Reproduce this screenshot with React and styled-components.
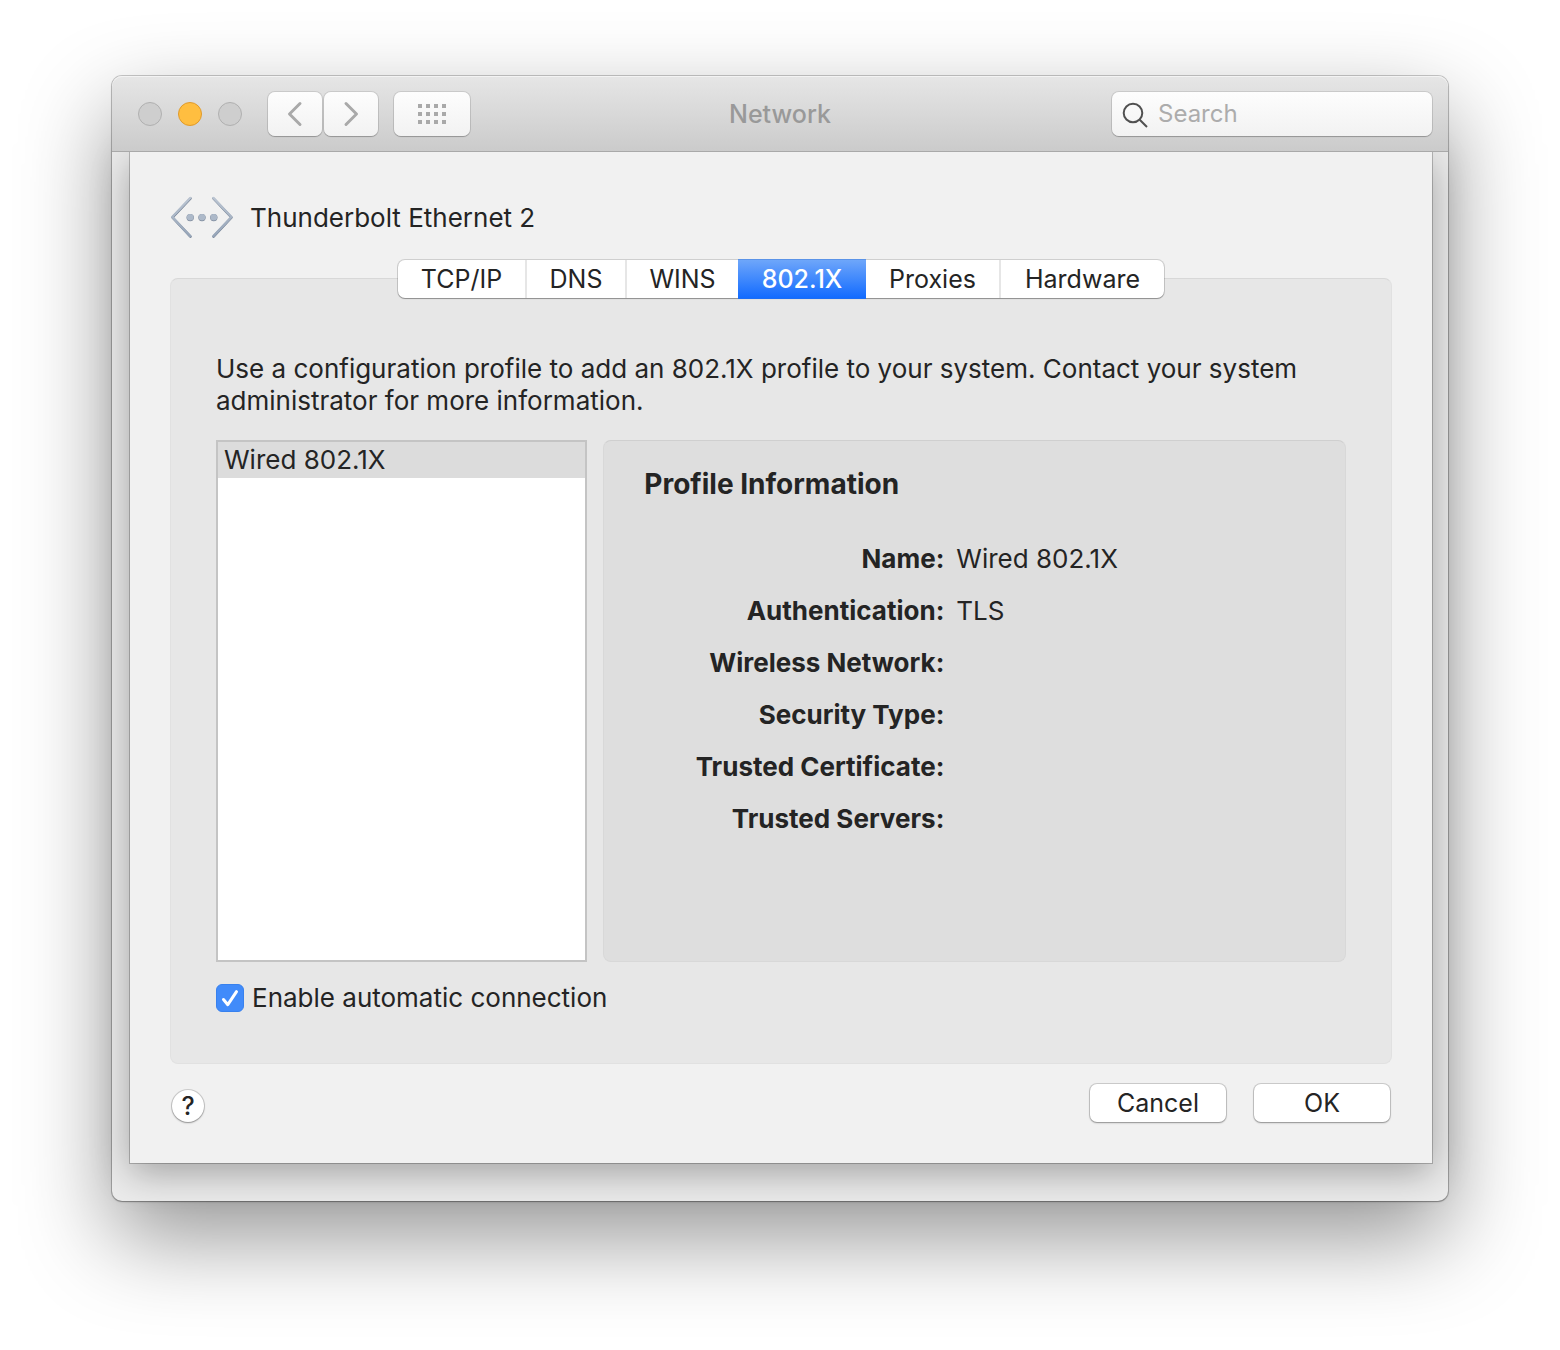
import React, { useState } from 'react';
import styled, { createGlobalStyle } from 'styled-components';

function App() {
  const [activeTab, setActiveTab] = useState('802.1X');
  const [autoConnect, setAutoConnect] = useState(true);

  return (
    <Page>
      <GlobalStyle />
      <Window>
        <TitleBar>
          <TitleLeft>
            <Lights>
              <Light type="button" aria-label="Close" />
              <Light type="button" aria-label="Minimize" $active />
              <Light type="button" aria-label="Zoom" />
            </Lights>
            <NavGroup>
              <ToolButton type="button" aria-label="Back">
                <svg width="16" height="26" viewBox="0 0 16 26">
                  <path d="M13 2.5 2.5 13 13 23.5" />
                </svg>
              </ToolButton>
              <ToolButton type="button" aria-label="Forward">
                <svg width="16" height="26" viewBox="0 0 16 26">
                  <path d="M3 2.5 13.5 13 3 23.5" />
                </svg>
              </ToolButton>
            </NavGroup>
            <ToolButton type="button" aria-label="Show All" $wide>
              <svg width="28" height="20" viewBox="0 0 28 20">
                {GRID_ROWS.map(y =>
                  GRID_COLS.map(x => (
                    <rect key={`${x}-${y}`} x={x} y={y} width="4" height="4" />
                  ))
                )}
              </svg>
            </ToolButton>
          </TitleLeft>
          <WindowTitle>Network</WindowTitle>
          <SearchBox>
            <svg width="28" height="28" viewBox="0 0 28 28" aria-hidden="true">
              <circle cx="11" cy="13" r="9.3" />
              <path d="m17.7 19.700 7.300 7.300" />
            </svg>
            <input type="search" placeholder="Search" aria-label="Search" />
          </SearchBox>
        </TitleBar>

        <Sheet>
          <ServiceHeader>
            <EthernetIcon />
            <h2>Thunderbolt Ethernet 2</h2>
          </ServiceHeader>

          <TabBar role="tablist">
            {TABS.map(({ name, width }) => (
              <Tab
                key={name}
                type="button"
                role="tab"
                aria-selected={name === activeTab}
                $width={width}
                $active={name === activeTab}
                onClick={() => setActiveTab(name)}
              >
                {name}
              </Tab>
            ))}
          </TabBar>

          <Panel>
            <Hint>
              Use a configuration profile to add an 802.1X profile to your
              system. Contact your system administrator for more information.
            </Hint>
            <Columns>
              <ProfileList>
                <ProfileItem>Wired 802.1X</ProfileItem>
              </ProfileList>
              <ProfileInfo>
                <h3>Profile Information</h3>
                <InfoList>
                  {INFO.map(({ label, value }) => (
                    <React.Fragment key={label}>
                      <dt>{label}:</dt>
                      <dd>{value}</dd>
                    </React.Fragment>
                  ))}
                </InfoList>
              </ProfileInfo>
            </Columns>
            <CheckLabel>
              <CheckBox>
                <input
                  type="checkbox"
                  checked={autoConnect}
                  onChange={e => setAutoConnect(e.target.checked)}
                />
                <svg width="28" height="28" viewBox="0 0 28 28">
                  <path d="m7.5 15.5 4.3 5.2 8.7-13" />
                </svg>
              </CheckBox>
              Enable automatic connection
            </CheckLabel>
          </Panel>

          <Footer>
            <HelpButton type="button" aria-label="Help">
              ?
            </HelpButton>
            <Actions>
              <PushButton type="button">Cancel</PushButton>
              <PushButton type="button">OK</PushButton>
            </Actions>
          </Footer>
        </Sheet>
      </Window>
    </Page>
  );
}

export default App;

function EthernetIcon() {
  return (
    <svg width="64" height="44" viewBox="0 0 64 44" aria-hidden="true">
      <defs>
        <linearGradient id="steel" x1="0" y1="0" x2="0" y2="44" gradientUnits="userSpaceOnUse">
          <stop offset="0" stopColor="#bcc6d3" />
          <stop offset="1" stopColor="#93a2b6" />
        </linearGradient>
      </defs>
      <g fill="none" strokeWidth="2.5" strokeLinecap="round" strokeLinejoin="round">
        <path d="M20.5 2.500 2.500 21.500 20.500 40.700M43.500 2.500l18 19-18 19.200" stroke="#69778b" />
        <path d="M20.2 2 2.300 21 20.200 40.200M43.500 2l17.900 19L43.500 40.200" stroke="url(#steel)" />
      </g>
      <g fill="#7c899b">
        <circle cx="20.2" cy="21.6" r="3.7" />
        <circle cx="32" cy="21.6" r="3.7" />
        <circle cx="43.8" cy="21.6" r="3.7" />
      </g>
      <g fill="#adb9c9">
        <circle cx="20.2" cy="21.2" r="3.3" />
        <circle cx="32" cy="21.2" r="3.3" />
        <circle cx="43.8" cy="21.2" r="3.3" />
      </g>
    </svg>
  );
}

const GRID_ROWS = [0, 8, 16];
const GRID_COLS = [0, 8, 16, 24];

const TABS = [
  { name: 'TCP/IP', width: 129 },
  { name: 'DNS', width: 100 },
  { name: 'WINS', width: 111 },
  { name: '802.1X', width: 128 },
  { name: 'Proxies', width: 135 },
  { name: 'Hardware', width: 163 },
];

const INFO = [
  { label: 'Name', value: 'Wired 802.1X' },
  { label: 'Authentication', value: 'TLS' },
  { label: 'Wireless Network', value: '' },
  { label: 'Security Type', value: '' },
  { label: 'Trusted Certificate', value: '' },
  { label: 'Trusted Servers', value: '' },
];

const GlobalStyle = createGlobalStyle`
  * {
    box-sizing: border-box;
  }

  body {
    margin: 0;
    background: #fff;
    color: #242424;
    font-family: Inter, 'Liberation Sans', sans-serif;
    font-size: 26px;
    line-height: 32px;
  }

  h1, h2, h3, p, ul, dl, dd {
    margin: 0;
    padding: 0;
  }

  button, input {
    font: inherit;
    font-size: 25px;
    color: inherit;
  }
`;

const Page = styled.div`
  min-height: 100vh;
  padding: 76px 112px 148px;
  overflow: hidden;
`;

const Window = styled.main`
  padding-bottom: 38px;
  border-radius: 10px;
  background: #ececec;
  box-shadow:
    0 0 0 1px rgba(0, 0, 0, 0.2),
    0 1px 2px rgba(0, 0, 0, 0.25),
    0 36px 90px rgba(0, 0, 0, 0.42);
`;

const TitleBar = styled.header`
  position: relative;
  z-index: 1;
  display: grid;
  grid-template-columns: 1fr auto 1fr;
  align-items: center;
  height: 76px;
  padding: 0 16px;
  border-bottom: 1px solid #a9a9a9;
  border-radius: 10px 10px 0 0;
  background: linear-gradient(#e6e6e6, #cbcbcb);
  box-shadow: inset 0 1px 0 #f3f3f3;
`;

const TitleLeft = styled.div`
  display: flex;
  align-items: center;
  gap: 16px;
`;

const Lights = styled.div`
  display: flex;
  gap: 16px;
  margin: 0 10px;
`;

const Light = styled.button`
  width: 24px;
  height: 24px;
  padding: 0;
  border: 1px solid ${({ $active }) => ($active ? '#e09a2b' : '#b0b0b0')};
  border-radius: 50%;
  background: ${({ $active }) => ($active ? '#ffbe40' : '#cecece')};
`;

const NavGroup = styled.div`
  display: flex;
  gap: 2px;
`;

const ToolButton = styled.button`
  display: flex;
  align-items: center;
  justify-content: center;
  width: ${({ $wide }) => ($wide ? '76px' : '54px')};
  height: 44px;
  padding: 0;
  border: 0;
  border-radius: 7px;
  background: linear-gradient(#fdfdfd, #f2f2f2);
  box-shadow:
    0 0 0 1px rgba(0, 0, 0, 0.1),
    0 1px 1px rgba(0, 0, 0, 0.2);

  path {
    fill: none;
    stroke: #a9a9a9;
    stroke-width: 3;
    stroke-linecap: round;
    stroke-linejoin: round;
  }

  rect {
    fill: #a9a9a9;
  }
`;

const WindowTitle = styled.h1`
  color: #999;
  font-size: 25px;
  font-weight: 500;
`;

const SearchBox = styled.label`
  display: flex;
  align-items: center;
  justify-self: end;
  gap: 8px;
  width: 320px;
  height: 44px;
  padding: 0 10px;
  border-radius: 7px;
  background: linear-gradient(#fdfdfd, #f2f2f2);
  box-shadow:
    0 0 0 1px rgba(0, 0, 0, 0.1),
    0 1px 1px rgba(0, 0, 0, 0.2);

  svg {
    flex: none;
    fill: none;
    stroke: #505050;
    stroke-width: 2;
  }

  input {
    flex: 1;
    min-width: 0;
    padding: 0;
    border: 0;
    outline: 0;
    background: none;
    font-size: 24px;
  }

  input::placeholder {
    color: #acacac;
  }
`;

const Sheet = styled.section`
  margin: 0 16px 0 18px;
  padding: 44px 40px 41px;
  background: #f1f1f1;
  box-shadow:
    0 0 0 1px rgba(0, 0, 0, 0.22),
    0 10px 36px rgba(0, 0, 0, 0.32);
`;

const ServiceHeader = styled.div`
  display: flex;
  align-items: center;
  gap: 16px;
  height: 44px;

  h2 {
    font-size: 26px;
    font-weight: 400;
  }
`;

const TabBar = styled.div`
  position: relative;
  z-index: 1;
  display: flex;
  width: fit-content;
  height: 38px;
  margin: 20px auto -20px;
  border-radius: 7px;
  background: #fff;
  box-shadow:
    0 0 0 1px rgba(0, 0, 0, 0.14),
    0 1px 1px rgba(0, 0, 0, 0.28);
`;

const Tab = styled.button`
  width: ${({ $width }) => $width}px;
  padding: 0;
  border: 0;
  border-right: 2px solid #e6e6e6;
  background: none;

  &:last-child {
    border-right: 0;
  }

  ${({ $active }) =>
    $active &&
    `
    border: 0;
    background: linear-gradient(#6ea6fa, #126bff);
    box-shadow: 0 -1px 0 #5a93e8, 0 1px 0 #1a6df5;
    color: #fff;
    font-weight: 500;
  `}

  &:has(+ [aria-selected='true']) {
    border-right: 0;
  }
`;

const Panel = styled.div`
  padding: 74px 45px 49px;
  border: 1px solid #e1e1e1;
  border-top-color: #d8d8d8;
  border-radius: 8px;
  background: #e7e7e7;
`;

const Hint = styled.p`
  margin-bottom: 23px;
`;

const Columns = styled.div`
  display: grid;
  grid-template-columns: 1fr 2fr;
  gap: 16px;
  min-height: 522px;
`;

const ProfileList = styled.ul`
  border: 2px solid #c4c4c4;
  background: #fff;
  list-style: none;
`;

const ProfileItem = styled.li`
  padding: 2px 6px;
  background: #dcdcdc;
`;

const ProfileInfo = styled.section`
  padding: 27px 40px;
  border: 1px solid #d8d8d8;
  border-top-color: #cfcfcf;
  border-radius: 8px;
  background: #dedede;

  h3 {
    font-size: 28px;
    font-weight: 700;
  }
`;

const InfoList = styled.dl`
  display: grid;
  grid-template-columns: 300px 1fr;
  grid-auto-rows: 32px;
  gap: 20px 12px;
  margin-top: 43px;

  dt {
    font-weight: 700;
    text-align: right;
  }
`;

const CheckLabel = styled.label`
  display: flex;
  align-items: center;
  gap: 8px;
  width: fit-content;
  margin-top: 20px;
`;

const CheckBox = styled.span`
  display: grid;

  > * {
    grid-area: 1 / 1;
  }

  input {
    appearance: none;
    width: 28px;
    height: 28px;
    margin: 0;
    border: 1px solid #b5b5b5;
    border-radius: 6px;
    background: #fff;
  }

  input:checked {
    border-color: #3881ee;
    background: #418bfa;
  }

  svg {
    display: none;
    fill: none;
    stroke: #fff;
    stroke-width: 3;
    stroke-linecap: round;
    stroke-linejoin: round;
    pointer-events: none;
  }

  input:checked + svg {
    display: block;
  }
`;

const Footer = styled.footer`
  display: flex;
  align-items: center;
  justify-content: space-between;
  margin-top: 20px;
`;

const HelpButton = styled.button`
  width: 32px;
  height: 32px;
  margin: 6px 0 0 2px;
  padding: 0;
  border: 0;
  border-radius: 50%;
  background: #fff;
  box-shadow:
    0 0 0 1px rgba(0, 0, 0, 0.15),
    0 1px 2px rgba(0, 0, 0, 0.3);
  font-weight: 500;
`;

const Actions = styled.div`
  display: flex;
  gap: 28px;
  padding-right: 2px;
`;

const PushButton = styled.button`
  width: 136px;
  height: 38px;
  padding: 0;
  border: 0;
  border-radius: 7px;
  background: #fff;
  box-shadow:
    0 0 0 1px rgba(0, 0, 0, 0.15),
    0 1px 2px rgba(0, 0, 0, 0.3);
`;
